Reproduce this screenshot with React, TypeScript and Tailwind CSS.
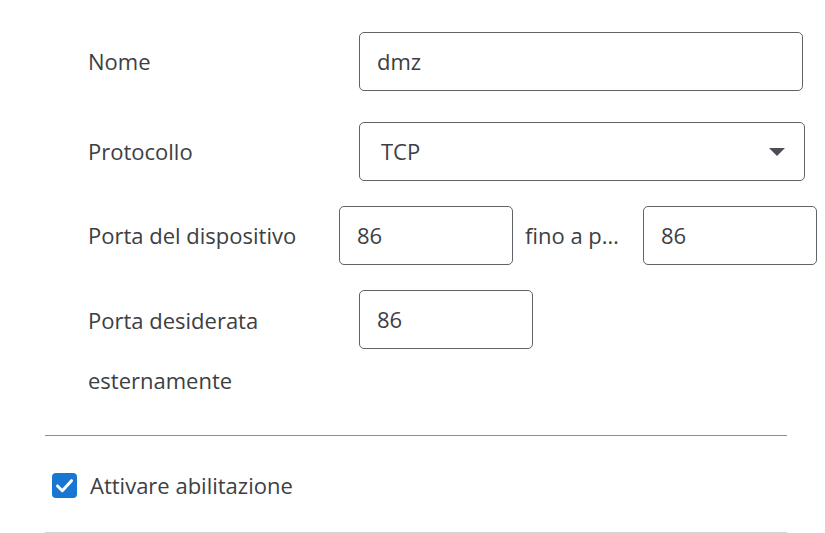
import React from 'react';

const label = "text-[22px] text-[#3c4043] leading-[59px]";
const field = "h-[59px] border border-[#5f6368] rounded-[5px] flex items-center text-[22px] text-[#3c4043] bg-white";

export default function App() {
    return (
        <div className="w-[825px] h-[533px] bg-white overflow-hidden pt-[32px] font-['Open_Sans',sans-serif]">
            {/* Nome */}
            <div className="flex items-center">
                <div className={`w-[359px] pl-[88px] ${label}`}>Nome</div>
                <div className={`w-[444px] pl-[17px] ${field}`}>dmz</div>
            </div>

            {/* Protocollo */}
            <div className="flex items-center mt-[31px]">
                <div className={`w-[359px] pl-[88px] ${label}`}>Protocollo</div>
                <div className={`w-[446px] pl-[21px] pr-[19px] justify-between ${field}`}>
                    <span>TCP</span>
                    <svg width="16" height="8" viewBox="0 0 16 8">
                        <path d="M0 0 L16 0 L8 8 Z" fill="#4b4f54" />
                    </svg>
                </div>
            </div>

            {/* Porta del dispositivo */}
            <div className="flex items-center mt-[25px]">
                <div className={`w-[339px] pl-[88px] whitespace-nowrap ${label}`}>Porta del dispositivo</div>
                <div className={`w-[174px] pl-[17px] ${field}`}>86</div>
                <div className={`w-[130px] pl-[12px] whitespace-nowrap ${label}`}>fino a p…</div>
                <div className={`w-[174px] pl-[17px] ${field}`}>86</div>
            </div>

            {/* Porta desiderata esternamente */}
            <div className="flex items-start mt-[25px]">
                <div className={`w-[359px] pl-[88px] text-[22px] text-[#3c4043] leading-[60px]`}>
                    Porta desiderata
                    <br />
                    esternamente
                </div>
                <div className={`w-[174px] pl-[17px] ${field}`}>86</div>
            </div>

            <div className="ml-[45px] w-[742px] h-px bg-[#8e8e8e] mt-[25px]" />

            {/* Attivare abilitazione */}
            <div className="flex items-center h-[25px] ml-[52px] mt-[37px]">
                <div className="w-[25px] h-[25px] rounded-[4px] bg-[#1976d2] flex items-center justify-center">
                    <svg width="21" height="21" viewBox="0 0 24 24">
                        <path d="M4 12.5 L9.5 18 L20 6.5" fill="none" stroke="white" strokeWidth="3.4" strokeLinecap="round" strokeLinejoin="round" />
                    </svg>
                </div>
                <span className={`ml-[13px] text-[22px] text-[#3c4043] whitespace-nowrap`}>Attivare abilitazione</span>
            </div>

            <div className="ml-[45px] w-[742px] h-px bg-[#d6d6d6] mt-[34px]" />
        </div>
    );
}
